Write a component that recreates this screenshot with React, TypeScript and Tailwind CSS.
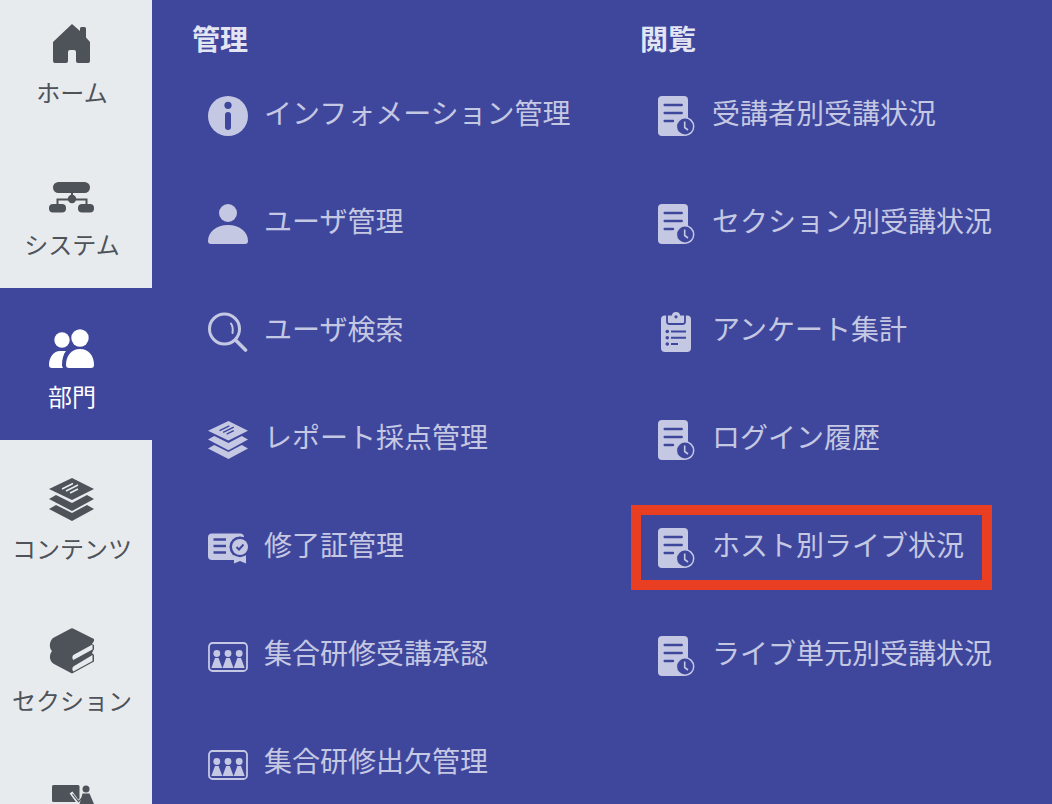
import React from "react";

const LIGHT = "#c5c8e2";
const BLUE = "#3f479d";
const DARK = "#4e5259";

type IconProps = { fg?: string; bg?: string };

function HomeIcon({ fg = DARK }: IconProps) {
  return (
    <svg width="48" height="48" viewBox="0 0 48 48">
      <path
        fill={fg}
        d="M24 4L32 11V8.5Q32 7 33.5 7H36.5Q38 7 38 8.5V17.5L42 22V41A2 2 0 0 1 40 43H30A2 2 0 0 1 28 41V32A2 2 0 0 0 26 30H22A2 2 0 0 0 20 32V41A2 2 0 0 1 18 43H7A2 2 0 0 1 5 41V22Z"
      />
    </svg>
  );
}

function SystemIcon({ fg = DARK }: IconProps) {
  return (
    <svg width="48" height="48" viewBox="0 0 48 48">
      <rect x="5" y="10" width="37" height="11" rx="5.5" fill={fg} />
      <path d="M24 20V28M9.5 33V27.5H38.5V33" fill="none" stroke={fg} strokeWidth="2" />
      <circle cx="24" cy="27" r="4.2" fill={fg} />
      <rect x="1" y="32" width="17" height="8.5" rx="4" fill={fg} />
      <rect x="30" y="32" width="16" height="8.5" rx="4" fill={fg} />
    </svg>
  );
}

function UsersIcon({ fg = DARK }: IconProps) {
  return (
    <svg width="48" height="48" viewBox="0 0 48 48">
      <circle cx="32" cy="14" r="8.7" fill={fg} />
      <circle cx="14" cy="16" r="7.7" fill={fg} />
      <path fill={fg} d="M18 41C18 32 23 25 32 25C41 25 46 32 46 41A3 3 0 0 1 43 44H21A3 3 0 0 1 18 41Z" />
      <path fill={fg} d="M1 41C1 33 6 27 12 27H18C15.5 30 14 35 14 41C14 42 14.3 43 15 44H4A3 3 0 0 1 1 41Z" />
    </svg>
  );
}

function LayersIcon({
  fg = DARK,
  bg = "#e8ebee",
  size = 48,
  box = "0 0 48 48",
}: IconProps & { size?: number; box?: string }) {
  return (
    <svg width={size} height={size} viewBox={box}>
      <path fill={fg} d="M24 2L46 13L24 24L1 13Z" />
      <path d="M14 13L25 7.5M18 15L30 9M22 17L30 13" stroke={bg} strokeWidth="1.6" fill="none" />
      <path fill={fg} d="M8 19L1 23L24 35L46 23L39 19L24 27Z" />
      <path fill={fg} d="M8 29L1 33L24 45L46 33L39 29L24 37Z" />
    </svg>
  );
}

function BooksIcon({ fg = DARK, bg = "#e8ebee" }: IconProps) {
  return (
    <svg width="48" height="48" viewBox="0 0 48 48">
      <path
        fill={fg}
        d="M23 .5Q24 0 25 .5L46 11V13L44 16L46 17V21L44 25L46 27V33.5L25 45Q24 45.5 23 45L6 36C1 33 1 27 4 23C1 20 1 14 5 10Z"
      />
      <path fill={bg} d="M25.3 27L44.5 16.5V21.5L25.3 32C24 30.5 24 28.5 25.3 27Z" />
      <path fill={bg} d="M25.3 38.5L44.5 27V33L25.3 43.5C24 42 24 40 25.3 38.5Z" />
    </svg>
  );
}

function TeacherIcon({ fg = DARK, bg = "#e8ebee" }: IconProps) {
  return (
    <svg width="48" height="48" viewBox="0 0 48 48">
      <rect x="4" y="5" width="27.5" height="17" rx="1.5" fill={fg} />
      <path d="M23 12.5L30 22M30 22L35 18" fill="none" stroke={bg} strokeWidth="3.4" />
      <path d="M24.5 14L30.5 21.7L35 17" fill="none" stroke={fg} strokeWidth="1.2" />
      <circle cx="38" cy="9" r="3.5" fill={fg} />
      <path fill={fg} d="M34.5 13.5H41.5L46 24H31.5L33 19Z" />
    </svg>
  );
}

function InfoIcon({ fg = LIGHT, bg = BLUE }: IconProps) {
  return (
    <svg width="40" height="40" viewBox="0 0 40 40">
      <circle cx="20" cy="20" r="20" fill={fg} />
      <circle cx="20" cy="9.3" r="3.6" fill={bg} />
      <rect x="17" y="16" width="6" height="18" rx="3" fill={bg} />
    </svg>
  );
}

function UserIcon({ fg = LIGHT }: IconProps) {
  return (
    <svg width="40" height="40" viewBox="0 0 40 40">
      <circle cx="20" cy="9" r="9" fill={fg} />
      <path fill={fg} d="M0 37C0 28 8 21 20 21S40 28 40 37A3 3 0 0 1 37 40H3A3 3 0 0 1 0 37Z" />
    </svg>
  );
}

function SearchIcon({ fg = LIGHT }: IconProps) {
  return (
    <svg width="40" height="40" viewBox="0 0 40 40">
      <circle cx="16.5" cy="17" r="15" fill="none" stroke={fg} strokeWidth="3" />
      <path d="M28 28.5L37.5 38" stroke={fg} strokeWidth="3.6" strokeLinecap="round" />
      <path d="M23 11.5Q25.5 15 24.5 21" fill="none" stroke={fg} strokeWidth="2" strokeLinecap="round" />
    </svg>
  );
}

function CertIcon({ fg = LIGHT, bg = BLUE }: IconProps) {
  return (
    <svg width="40" height="40" viewBox="0 0 40 40">
      <rect x="0" y="5.5" width="36" height="26.5" rx="4" fill={fg} />
      <path d="M5.5 11.5H18M5.5 18H18M5.5 24.5H18" stroke={bg} strokeWidth="2.4" />
      <circle cx="32" cy="19" r="10.5" fill={bg} />
      <path fill={fg} d="M26 27H38V35.5L32 33L26 35.5Z" />
      <circle cx="32" cy="19" r="10.2" fill={bg} />
      <circle cx="32" cy="19" r="8" fill={fg} />
      <path d="M28.5 19L31 21.5L35.5 16.5" fill="none" stroke={bg} strokeWidth="1.9" />
    </svg>
  );
}

function GroupIcon({ fg = LIGHT }: IconProps) {
  return (
    <svg width="40" height="40" viewBox="0 0 40 40">
      <rect x="1" y="7" width="38" height="28" rx="3.5" fill="none" stroke={fg} strokeWidth="1.8" />
      {[8.8, 20, 31.2].map((x) => (
        <g key={x} fill={fg}>
          <circle cx={x} cy="17.5" r="3.4" />
          <path d={`M${x - 1.8} 22H${x + 1.8}L${x + 5.5} 32H${x - 5.5}Z`} />
        </g>
      ))}
    </svg>
  );
}

function DocClockIcon({ fg = LIGHT, bg = BLUE }: IconProps) {
  return (
    <svg width="40" height="40" viewBox="0 0 40 40">
      <rect x="2" y="0" width="30" height="40" rx="4" fill={fg} />
      <path d="M8.7 9H25.7M8.7 17H25.7M8.7 25H17" stroke={bg} strokeWidth="2.4" strokeLinecap="round" />
      <circle cx="29" cy="30.5" r="8.7" fill={bg} stroke={fg} strokeWidth="1.5" />
      <path d="M28.7 25.5V31.5L32 34" fill="none" stroke={fg} strokeWidth="1.6" />
    </svg>
  );
}

function ClipboardIcon({ fg = LIGHT, bg = BLUE }: IconProps) {
  return (
    <svg width="40" height="40" viewBox="0 0 40 40">
      <rect x="5" y="3.5" width="30" height="36.5" rx="4" fill={fg} />
      <path d="M11 2V9.5A2.5 2.5 0 0 0 13.5 12H26.5A2.5 2.5 0 0 0 29 9.5V2" fill="none" stroke={bg} strokeWidth="1.8" />
      <path fill={fg} d="M12 6H16V3.5A4 3.5 0 0 1 24 3.5V6H28V9.5Q28 10.5 27 10.5H13Q12 10.5 12 9.5Z" />
      <circle cx="20" cy="4.8" r="1.6" fill={bg} />
      <circle cx="11.3" cy="19.5" r="1.8" fill={bg} />
      <circle cx="11.3" cy="25.7" r="1.8" fill={bg} />
      <circle cx="11.3" cy="32" r="1.8" fill={bg} />
      <path d="M15 19.5H30M15 25.7H30M15 32H22" stroke={bg} strokeWidth="1.9" />
    </svg>
  );
}

function SideItem({ label, icon, active }: { label: string; icon: React.ReactNode; active?: boolean }) {
  return (
    <div
      className={`h-[152px] flex flex-col items-center pt-[36px] pr-2 ${
        active ? "bg-[#3f479d] text-white" : "text-[#4e5259]"
      }`}
    >
      {icon}
      <span className="mt-2 text-[24px] leading-[32px] whitespace-nowrap">{label}</span>
    </div>
  );
}

function Row({ label, icon, highlight }: { label: string; icon: React.ReactNode; highlight?: boolean }) {
  return (
    <div className="relative h-[108px] flex items-center pl-4 gap-4">
      <div className="mt-1 w-10 h-10 shrink-0">{icon}</div>
      <span className="mb-1 text-[28px] leading-[40px] text-[#c5c8e2] whitespace-nowrap">{label}</span>
      {highlight && (
        <div className="absolute left-[-9px] top-[13px] w-[361px] h-[85px] border-[10px] border-[#ea3e23]" />
      )}
    </div>
  );
}

function Heading({ children }: { children: React.ReactNode }) {
  return (
    <div className="h-[60px] pt-[18px] text-[28px] leading-[40px] font-bold text-[#e3e5f2]">{children}</div>
  );
}

export default function App() {
  return (
    <div className="w-[1052px] h-[804px] overflow-hidden flex bg-[#3f479d] font-['Noto_Sans_CJK_JP','Noto_Sans',sans-serif]">
      <aside className="w-[152px] shrink-0 -mt-4 bg-[#e8ebee]">
        <SideItem label="ホーム" icon={<HomeIcon />} />
        <SideItem label="システム" icon={<SystemIcon />} />
        <SideItem label="部門" icon={<UsersIcon fg="#ffffff" />} active />
        <SideItem label="コンテンツ" icon={<LayersIcon />} />
        <SideItem label="セクション" icon={<BooksIcon />} />
        <SideItem label="" icon={<TeacherIcon />} />
      </aside>
      <main className="flex-1 grid grid-cols-[448px_1fr] pl-10 content-start">
        <section>
          <Heading>管理</Heading>
          <Row label="インフォメーション管理" icon={<InfoIcon />} />
          <Row label="ユーザ管理" icon={<UserIcon />} />
          <Row label="ユーザ検索" icon={<SearchIcon />} />
          <Row label="レポート採点管理" icon={<LayersIcon fg={LIGHT} bg={BLUE} size={40} box="1 1 45 45" />} />
          <Row label="修了証管理" icon={<CertIcon />} />
          <Row label="集合研修受講承認" icon={<GroupIcon />} />
          <Row label="集合研修出欠管理" icon={<GroupIcon />} />
        </section>
        <section>
          <Heading>閲覧</Heading>
          <Row label="受講者別受講状況" icon={<DocClockIcon />} />
          <Row label="セクション別受講状況" icon={<DocClockIcon />} />
          <Row label="アンケート集計" icon={<ClipboardIcon />} />
          <Row label="ログイン履歴" icon={<DocClockIcon />} />
          <Row label="ホスト別ライブ状況" icon={<DocClockIcon />} highlight />
          <Row label="ライブ単元別受講状況" icon={<DocClockIcon />} />
        </section>
      </main>
    </div>
  );
}
